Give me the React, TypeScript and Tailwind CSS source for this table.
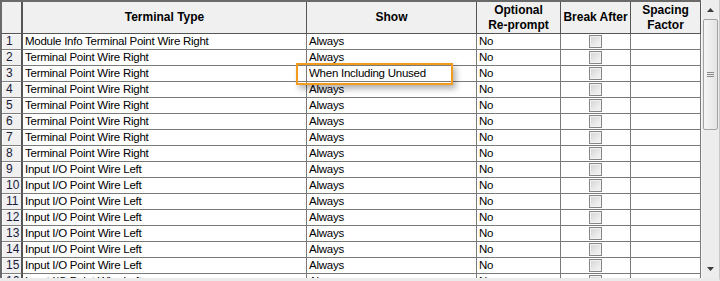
import React from 'react';

type Row = { id: number; type: string; show: string; reprompt: string };

const rows: Row[] = Array.from({ length: 16 }, (_, i) => {
  const n = i + 1;
  let type = 'Input I/O Point Wire Left';
  if (n === 1) type = 'Module Info Terminal Point Wire Right';
  else if (n <= 8) type = 'Terminal Point Wire Right';
  return { id: n, type, show: n === 3 ? 'When Including Unused' : 'Always', reprompt: 'No' };
});

const cols = 'grid grid-cols-[21px_284px_170px_84px_70px_70px]';

const Checkbox: React.FC = () => (
  <div className="w-[13px] h-[13px] border border-[#858686] bg-gradient-to-br from-[#d4d4d4] to-[#f7f7f7] shadow-[inset_0_0_0_1px_#f2f2f2]" />
);

const HeaderCell: React.FC<{ children?: React.ReactNode }> = ({ children }) => (
  <div className="h-[32px] flex items-center justify-center text-center font-bold text-[12px] leading-[15px] text-black bg-[#f0f0f0] border-b border-r border-[#555]">
    {children}
  </div>
);

const ScrollBar: React.FC = () => (
  <div className="w-[18px] h-full flex flex-col bg-[#ededed] border-l border-[#f7f7f7]">
    <div className="h-[19px] flex items-center justify-center">
      <svg width="7" height="4" viewBox="0 0 7 4">
        <path d="M0 4 L3.5 0 L7 4 Z" fill="#3c3c3c" />
      </svg>
    </div>
    <div className="mx-[1px] h-[111px] rounded-[2px] border border-[#a3a3a3] bg-gradient-to-r from-[#f6f6f6] to-[#e3e3e3] flex items-center justify-center">
      <div className="flex flex-col gap-[1px]">
        <div className="w-[7px] h-[1px] bg-[#8a8a8a]" />
        <div className="w-[7px] h-[1px] bg-[#8a8a8a]" />
        <div className="w-[7px] h-[1px] bg-[#8a8a8a]" />
      </div>
    </div>
    <div className="flex-1" />
    <div className="h-[18px] flex items-center justify-center">
      <svg width="7" height="4" viewBox="0 0 7 4">
        <path d="M0 0 L7 0 L3.5 4 Z" fill="#3c3c3c" />
      </svg>
    </div>
  </div>
);

const App: React.FC = () => {
  return (
    <div
      className="relative w-[720px] h-[281px] overflow-hidden bg-white flex border-b-[3px] border-[#ebebeb] border-r border-r-[#c8c8c8]"
      style={{ fontFamily: '"Liberation Sans", Arial, sans-serif' }}
    >
      <div className="w-[701px] h-full overflow-hidden border-t-2 border-l-2 border-[#6a6a6a]">
        <div className={cols}>
          <div className="h-[32px] bg-[#f0f0f0] border-r-2 border-r-[#555] border-b border-[#555]" />
          <HeaderCell>Terminal Type</HeaderCell>
          <HeaderCell>Show</HeaderCell>
          <HeaderCell>
            Optional
            <br />
            Re-prompt
          </HeaderCell>
          <HeaderCell>Break After</HeaderCell>
          <HeaderCell>
            Spacing
            <br />
            Factor
          </HeaderCell>
        </div>

        {rows.map((r) => (
          <div key={r.id} className={`${cols} h-[16px] text-[11.5px] leading-[15px] text-black tracking-[-0.25px]`}>
            <div className="bg-[#f0f0f0] border-r-2 border-r-[#555] border-b border-[#808080] shadow-[inset_1px_1px_0_#ffffff] pl-[4px] text-[12px] tracking-normal text-[#1a1a3a]">
              {r.id}
            </div>
            <div className="border-r border-b border-[#7a7a7a] pl-[2px] whitespace-nowrap overflow-hidden">{r.type}</div>
            <div className="border-r border-b border-[#7a7a7a] pl-[2px] whitespace-nowrap overflow-hidden">{r.show}</div>
            <div className="border-r border-b border-[#7a7a7a] pl-[2px]">{r.reprompt}</div>
            <div className="border-r border-b border-[#7a7a7a] flex items-center justify-center">
              <Checkbox />
            </div>
            <div className="border-r border-b border-[#7a7a7a]" />
          </div>
        ))}
      </div>

      <ScrollBar />

      {/* highlight around the edited Show value */}
      <div className="absolute left-[296px] top-[63px] w-[157px] h-[22px] border-2 border-[#f29b1d] shadow-[3px_4px_6px_rgba(0,0,0,0.3)] pointer-events-none" />
    </div>
  );
};

export default App;
